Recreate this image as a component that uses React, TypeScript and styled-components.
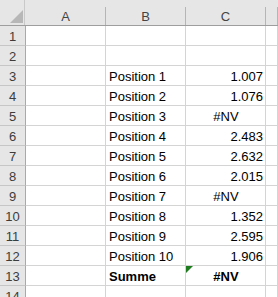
import React from 'react'
import styled, { createGlobalStyle } from 'styled-components'

const GlobalStyle = createGlobalStyle`
	html, body {
		margin: 0;
		padding: 0;
		background: #ffffff;
		overflow: hidden;
	}
	body {
		font-family: 'Liberation Sans', Arial, sans-serif;
	}
`

type Value = { text: string; kind: 'num' | 'err' | 'text' }

interface RowData {
	b?: string
	c?: Value
	bold?: boolean
	flag?: boolean
}

const rows: RowData[] = [
	{},
	{},
	{ b: 'Position 1', c: { text: '1.007', kind: 'num' } },
	{ b: 'Position 2', c: { text: '1.076', kind: 'num' } },
	{ b: 'Position 3', c: { text: '#NV', kind: 'err' } },
	{ b: 'Position 4', c: { text: '2.483', kind: 'num' } },
	{ b: 'Position 5', c: { text: '2.632', kind: 'num' } },
	{ b: 'Position 6', c: { text: '2.015', kind: 'num' } },
	{ b: 'Position 7', c: { text: '#NV', kind: 'err' } },
	{ b: 'Position 8', c: { text: '1.352', kind: 'num' } },
	{ b: 'Position 9', c: { text: '2.595', kind: 'num' } },
	{ b: 'Position 10', c: { text: '1.906', kind: 'num' } },
	{ b: 'Summe', c: { text: '#NV', kind: 'err' }, bold: true, flag: true },
	{}
]

const columns = '26px 80px 80px 80px 1fr'

export default function App() {
	return (
		<Sheet>
			<GlobalStyle />
			<HeaderBar>
				<Corner>
					<svg width="14" height="14" viewBox="0 0 14 14">
						<polygon points="13,0 13,13 0,13" fill="#b7b7b7" />
					</svg>
				</Corner>
				<ColHead>A</ColHead>
				<ColHead>B</ColHead>
				<ColHead>C</ColHead>
				<ColHead />
			</HeaderBar>
			{rows.map((row, i) => (
				<Row key={i}>
					<RowHead>{i + 1}</RowHead>
					<Cell />
					<Cell bold={row.bold}>{row.b}</Cell>
					<Cell
						bold={row.bold}
						align={row.c?.kind === 'num' ? 'right' : row.c?.kind === 'err' ? 'center' : 'left'}>
						{row.flag && <ErrorFlag />}
						{row.c?.text}
					</Cell>
					<Cell />
				</Row>
			))}
		</Sheet>
	)
}

const Sheet = styled.div`
	width: 278px;
	height: 297px;
	overflow: hidden;
	background: #ffffff;
`

const HeaderBar = styled.div`
	display: grid;
	grid-template-columns: ${columns};
	height: 26px;
	box-sizing: border-box;
	padding-top: 7px;
	background: #e6e6e6;
	border-bottom: 1px solid #9e9e9e;
	position: relative;
`

const Corner = styled.div`
	position: absolute;
	left: 0;
	top: 0;
	width: 25px;
	height: 25px;
	box-sizing: border-box;
	padding: 10px 0 0 10px;
	display: flex;
	border-right: 1px solid #c9c9c9;
	svg {
		display: block;
	}
`

const ColHead = styled.div`
	display: flex;
	align-items: center;
	justify-content: center;
	border-right: 1px solid #b5b5b5;
	font-size: 13px;
	color: #444444;
	&:nth-child(2) {
		grid-column: 2;
	}
`

const Row = styled.div`
	display: grid;
	grid-template-columns: ${columns};
	height: 20px;
`

const RowHead = styled.div`
	background: #e6e6e6;
	border-right: 1px solid #a9a9a9;
	border-bottom: 1px solid #c6c6c6;
	display: flex;
	align-items: flex-end;
	justify-content: center;
	font-size: 13px;
	line-height: 16px;
	color: #3c3c3c;
`

const Cell = styled.div<{ bold?: boolean; align?: 'left' | 'right' | 'center' }>`
	position: relative;
	border-right: 1px solid #d4d4d4;
	border-bottom: 1px solid #d4d4d4;
	display: flex;
	align-items: flex-end;
	justify-content: ${p =>
		p.align === 'right' ? 'flex-end' : p.align === 'center' ? 'center' : 'flex-start'};
	padding: 0 2px 0 3px;
	font-size: 13px;
	line-height: 16px;
	font-weight: ${p => (p.bold ? 700 : 400)};
	color: #000000;
	white-space: nowrap;
`

const ErrorFlag = styled.span`
	position: absolute;
	left: 0;
	top: 0;
	width: 0;
	height: 0;
	border-top: 7px solid #1e7b1e;
	border-right: 7px solid transparent;
`
